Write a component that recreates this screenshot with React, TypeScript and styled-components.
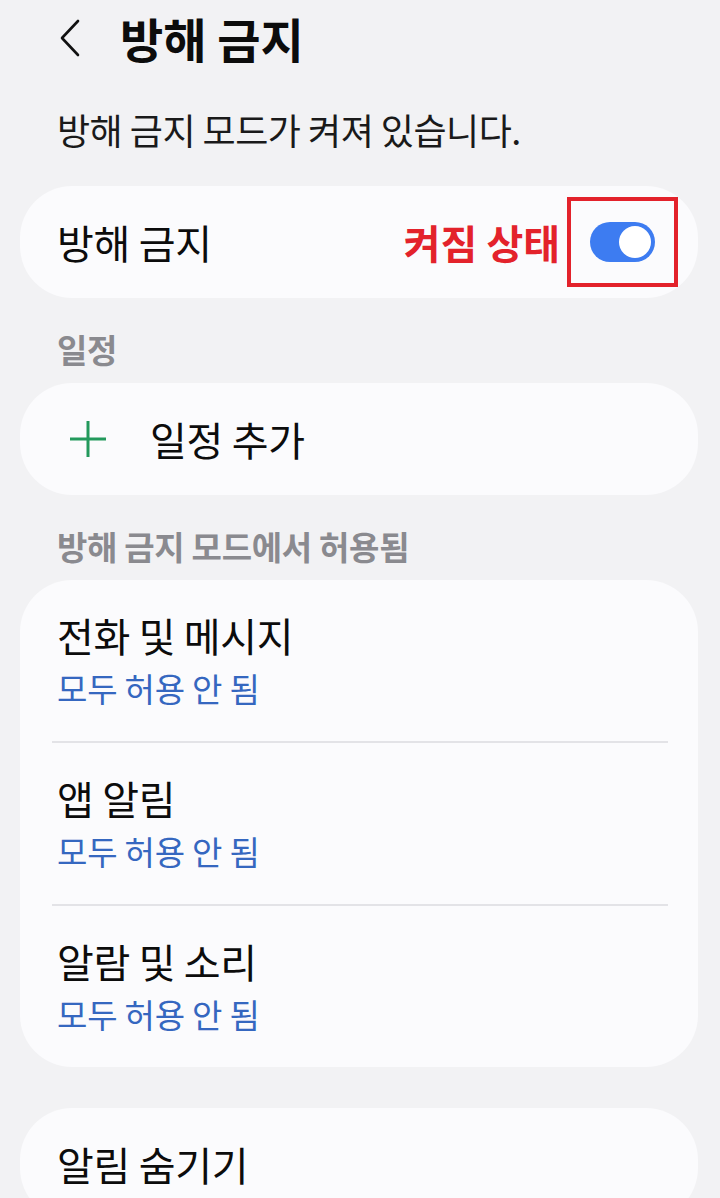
import React from "react";
import styled, { createGlobalStyle } from "styled-components";

const GlobalStyle = createGlobalStyle`
  html, body {
    margin: 0;
    padding: 0;
    background: #f2f2f4;
  }
  body {
    font-family: "Noto Sans CJK KR", "Noto Sans", sans-serif;
    color: #111;
  }
`;

const Page = styled.div`
  width: 720px;
  min-height: 1198px;
  background: #f2f2f4;
  overflow: hidden;
`;

const Header = styled.div`
  display: flex;
  align-items: center;
  height: 76px;
  padding-left: 58px;
`;

const BackButton = styled.div`
  width: 24px;
  height: 40px;
  display: flex;
  align-items: center;
  justify-content: center;
  margin-right: 38px;
`;

const Title = styled.h1`
  margin: 0;
  font-size: 47px;
  font-weight: 700;
  line-height: 76px;
  letter-spacing: 0;
  color: #0c0c0c;
`;

const Subtitle = styled.p`
  margin: 29px 0 0;
  padding-left: 57px;
  font-size: 36px;
  line-height: 48px;
  color: #1a1a1a;
  letter-spacing: -0.5px;
`;

const Card = styled.div<{ $top?: number }>`
  margin: ${(p) => p.$top ?? 0}px 22px 0 20px;
  background: #fbfbfd;
  border-radius: 52px;
  overflow: hidden;
`;

const SingleRow = styled.div`
  height: 112px;
  display: flex;
  align-items: center;
  padding: 0 20px 0 37px;
`;

const RowLabel = styled.span`
  font-size: 40px;
  line-height: 52px;
  color: #0c0c0c;
  letter-spacing: -0.3px;
`;

const Spacer = styled.div`
  flex: 1;
`;

const StateNote = styled.span`
  font-size: 40px;
  font-weight: 700;
  line-height: 52px;
  color: #e3222b;
  margin-right: 7px;
  letter-spacing: 0;
`;

const HighlightBox = styled.div`
  width: 103px;
  height: 82px;
  border: 4px solid #e3222b;
  display: flex;
  align-items: center;
  justify-content: center;
`;

const Track = styled.div<{ $on: boolean }>`
  width: 65px;
  height: 40px;
  border-radius: 20px;
  background: ${(p) => (p.$on ? "#3d7cf1" : "#c9c9cf")};
  display: flex;
  align-items: center;
  justify-content: ${(p) => (p.$on ? "flex-end" : "flex-start")};
  padding: 0 4px;
  box-sizing: border-box;
`;

const Thumb = styled.div`
  width: 32px;
  height: 32px;
  border-radius: 50%;
  background: #ffffff;
`;

const SectionHeader = styled.div`
  padding: 31px 0 14px 57px;
  font-size: 33px;
  font-weight: 700;
  line-height: 40px;
  color: #8a8a8f;
  letter-spacing: -0.3px;
`;

const AddIcon = styled.div`
  width: 40px;
  height: 40px;
  display: flex;
  align-items: center;
  justify-content: center;
  margin: 0 42px 0 11px;
`;

const DetailRow = styled.div`
  height: 161px;
  display: flex;
  flex-direction: column;
  justify-content: center;
  padding: 0 37px;
`;

const DetailTitle = styled.span`
  font-size: 40px;
  line-height: 54px;
  color: #0c0c0c;
  letter-spacing: -0.3px;
`;

const DetailValue = styled.span`
  font-size: 33px;
  line-height: 52px;
  color: #3567c0;
  letter-spacing: -0.2px;
`;

const Divider = styled.div`
  height: 2px;
  background: #e3e3e7;
  margin: 0 30px 0 32px;
`;

const Chevron = () => (
  <svg width="24" height="40" viewBox="0 0 24 40" fill="none">
    <path
      d="M20 3 L4 20 L20 37"
      stroke="#111"
      strokeWidth="2.6"
      strokeLinecap="round"
      strokeLinejoin="round"
    />
  </svg>
);

const Plus = () => (
  <svg width="38" height="38" viewBox="0 0 38 38" fill="none">
    <path d="M19 1 V37 M1 19 H37" stroke="#23995c" strokeWidth="3" />
  </svg>
);

const rules = [
  { title: "전화 및 메시지", value: "모두 허용 안 됨" },
  { title: "앱 알림", value: "모두 허용 안 됨" },
  { title: "알람 및 소리", value: "모두 허용 안 됨" },
];

export default function App() {
  return (
    <>
      <GlobalStyle />
      <Page>
        <Header>
          <BackButton>
            <Chevron />
          </BackButton>
          <Title>방해 금지</Title>
        </Header>
        <Subtitle>방해 금지 모드가 켜져 있습니다.</Subtitle>

        <Card $top={33}>
          <SingleRow>
            <RowLabel>방해 금지</RowLabel>
            <Spacer />
            <StateNote>켜짐 상태</StateNote>
            <HighlightBox>
              <Track $on>
                <Thumb />
              </Track>
            </HighlightBox>
          </SingleRow>
        </Card>

        <SectionHeader>일정</SectionHeader>
        <Card>
          <SingleRow>
            <AddIcon>
              <Plus />
            </AddIcon>
            <RowLabel>일정 추가</RowLabel>
          </SingleRow>
        </Card>

        <SectionHeader>방해 금지 모드에서 허용됨</SectionHeader>
        <Card>
          {rules.map((r, i) => (
            <React.Fragment key={r.title}>
              {i > 0 && <Divider />}
              <DetailRow>
                <DetailTitle>{r.title}</DetailTitle>
                <DetailValue>{r.value}</DetailValue>
              </DetailRow>
            </React.Fragment>
          ))}
        </Card>

        <Card $top={41}>
          <SingleRow>
            <RowLabel>알림 숨기기</RowLabel>
          </SingleRow>
        </Card>
      </Page>
    </>
  );
}
